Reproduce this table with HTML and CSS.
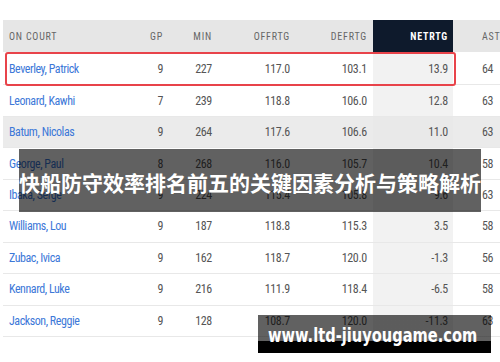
FILE: index.html
```html
<!DOCTYPE html>
<html>
<head>
<meta charset="utf-8">
<link rel="stylesheet" href="styles.css">
</head>
<body>
<div class="page">
  <div class="table">
    <div class="row head">
      <div class="c name">ON COURT</div>
      <div class="c">GP</div>
      <div class="c">MIN</div>
      <div class="c">OFFRTG</div>
      <div class="c">DEFRTG</div>
      <div class="c net">NETRTG</div>
      <div class="c ast">AST</div>
    </div>
    <div class="row"><div class="c name">Beverley, Patrick</div><div class="c">9</div><div class="c">227</div><div class="c">117.0</div><div class="c">103.1</div><div class="c net">13.9</div><div class="c ast">64</div></div>
    <div class="row"><div class="c name">Leonard, Kawhi</div><div class="c">7</div><div class="c">239</div><div class="c">118.8</div><div class="c">106.0</div><div class="c net">12.8</div><div class="c ast">63</div></div>
    <div class="row hl"><div class="c name">Batum, Nicolas</div><div class="c">9</div><div class="c">264</div><div class="c">117.6</div><div class="c">106.6</div><div class="c net">11.0</div><div class="c ast">63</div></div>
    <div class="row"><div class="c name">George, Paul</div><div class="c">8</div><div class="c">268</div><div class="c">116.0</div><div class="c">105.7</div><div class="c net">10.4</div><div class="c ast">58</div></div>
    <div class="row"><div class="c name">Ibaka, Serge</div><div class="c">9</div><div class="c">224</div><div class="c">115.4</div><div class="c">105.8</div><div class="c net">9.6</div><div class="c ast">63</div></div>
    <div class="row"><div class="c name">Williams, Lou</div><div class="c">9</div><div class="c">187</div><div class="c">118.8</div><div class="c">115.3</div><div class="c net">3.5</div><div class="c ast">58</div></div>
    <div class="row"><div class="c name">Zubac, Ivica</div><div class="c">9</div><div class="c">162</div><div class="c">118.7</div><div class="c">120.0</div><div class="c net">-1.3</div><div class="c ast">56</div></div>
    <div class="row"><div class="c name">Kennard, Luke</div><div class="c">9</div><div class="c">216</div><div class="c">111.9</div><div class="c">118.4</div><div class="c net">-6.5</div><div class="c ast">58</div></div>
    <div class="row"><div class="c name">Jackson, Reggie</div><div class="c">9</div><div class="c">128</div><div class="c">108.7</div><div class="c">120.0</div><div class="c net">-11.3</div><div class="c ast">63</div></div>
    <div class="focus"></div>
  </div>
  <div class="title">快船防守效率排名前五的关键因素分析与策略解析</div>
  <div class="url"><span>www.ltd-jiuyougame.com</span></div>
</div>
</body>
</html>
```
FILE: styles.css
```css
html, body {
  margin: 0;
  padding: 0;
  background: #fff;
}
.page {
  position: relative;
  width: 500px;
  height: 362px;
  overflow: hidden;
  padding-top: 20px;
  box-sizing: border-box;
}
.table {
  position: relative;
  margin-left: 3px;
  width: 497px;
  overflow: hidden;
  font-family: "Roboto Condensed", "Liberation Sans Narrow", "DejaVu Sans Condensed", Roboto, sans-serif;
  font-stretch: condensed;
  font-size: 12px;
  letter-spacing: -0.3px;
  color: #555;
}
.row {
  display: grid;
  grid-template-columns: 117px 49px 49px 78px 77px 80px 77px;
  width: 527px;
  height: 31.44px;
  border-bottom: 1px solid #e8e8e8;
  box-sizing: border-box;
}
.row.head {
  height: 34px;
  background: linear-gradient(to bottom, #e6e6e6 0, #e6e6e6 32px, #fff 32px);
  border-bottom: none;
  color: #666;
  font-size: 10px;
  letter-spacing: 0.8px;
}
.row.hl {
  background: #ebebeb;
}
.c {
  display: flex;
  align-items: center;
  justify-content: flex-end;
  padding-right: 6px;
}
.head .c {
  height: 32px;
}
.c.name {
  justify-content: flex-start;
  padding-left: 6px;
  padding-right: 0;
  color: #3c78d8;
  letter-spacing: -0.45px;
}
.head .c.name {
  color: #666;
  letter-spacing: 0.8px;
}
.c.net {
  background: #f2f2f2;
  padding-right: 5px;
}
.row.hl .c.net { background: #e9e9e9; }
.head .c.net {
  background: #0e1a2c;
  color: #fff;
  font-weight: 700;
  position: relative;
}
.head .c.net::after {
  content: "";
  position: absolute;
  left: 0;
  right: 0;
  bottom: -2px;
  height: 2px;
  background: linear-gradient(90deg, #e8511f, #f6b41b);
}
.c.ast {
  justify-content: flex-start;
  padding-left: 29px;
  padding-right: 0;
}
.focus {
  position: absolute;
  left: 2px;
  top: 32px;
  width: 451px;
  height: 34px;
  border: 2px solid #e8434a;
  border-radius: 3px;
  box-sizing: border-box;
}
.title {
  position: absolute;
  left: 19px;
  top: 149px;
  width: 462px;
  height: 63px;
  background: rgba(0, 0, 0, 0.62);
  display: flex;
  align-items: center;
  justify-content: center;
  color: #fff;
  font-family: "Noto Sans CJK SC", sans-serif;
  font-weight: 700;
  font-size: 21px;
  line-height: 1;
  padding-top: 3px;
  box-sizing: border-box;
  white-space: nowrap;
}
.url {
  position: absolute;
  left: 258px;
  top: 315px;
  width: 233px;
  height: 38px;
  box-sizing: border-box;
  padding: 9px 0 0 10px;
  background: linear-gradient(to bottom, rgba(0, 0, 0, 0.62) 0, rgba(0, 0, 0, 0.62) 26px, #000 26px);
  color: #fff;
  font-family: "DejaVu Sans", sans-serif;
  font-weight: 700;
  font-size: 19px;
  line-height: 22px;
  white-space: nowrap;
}
.url span {
  display: inline-block;
  transform: scaleX(0.77);
  transform-origin: left center;
}
```
